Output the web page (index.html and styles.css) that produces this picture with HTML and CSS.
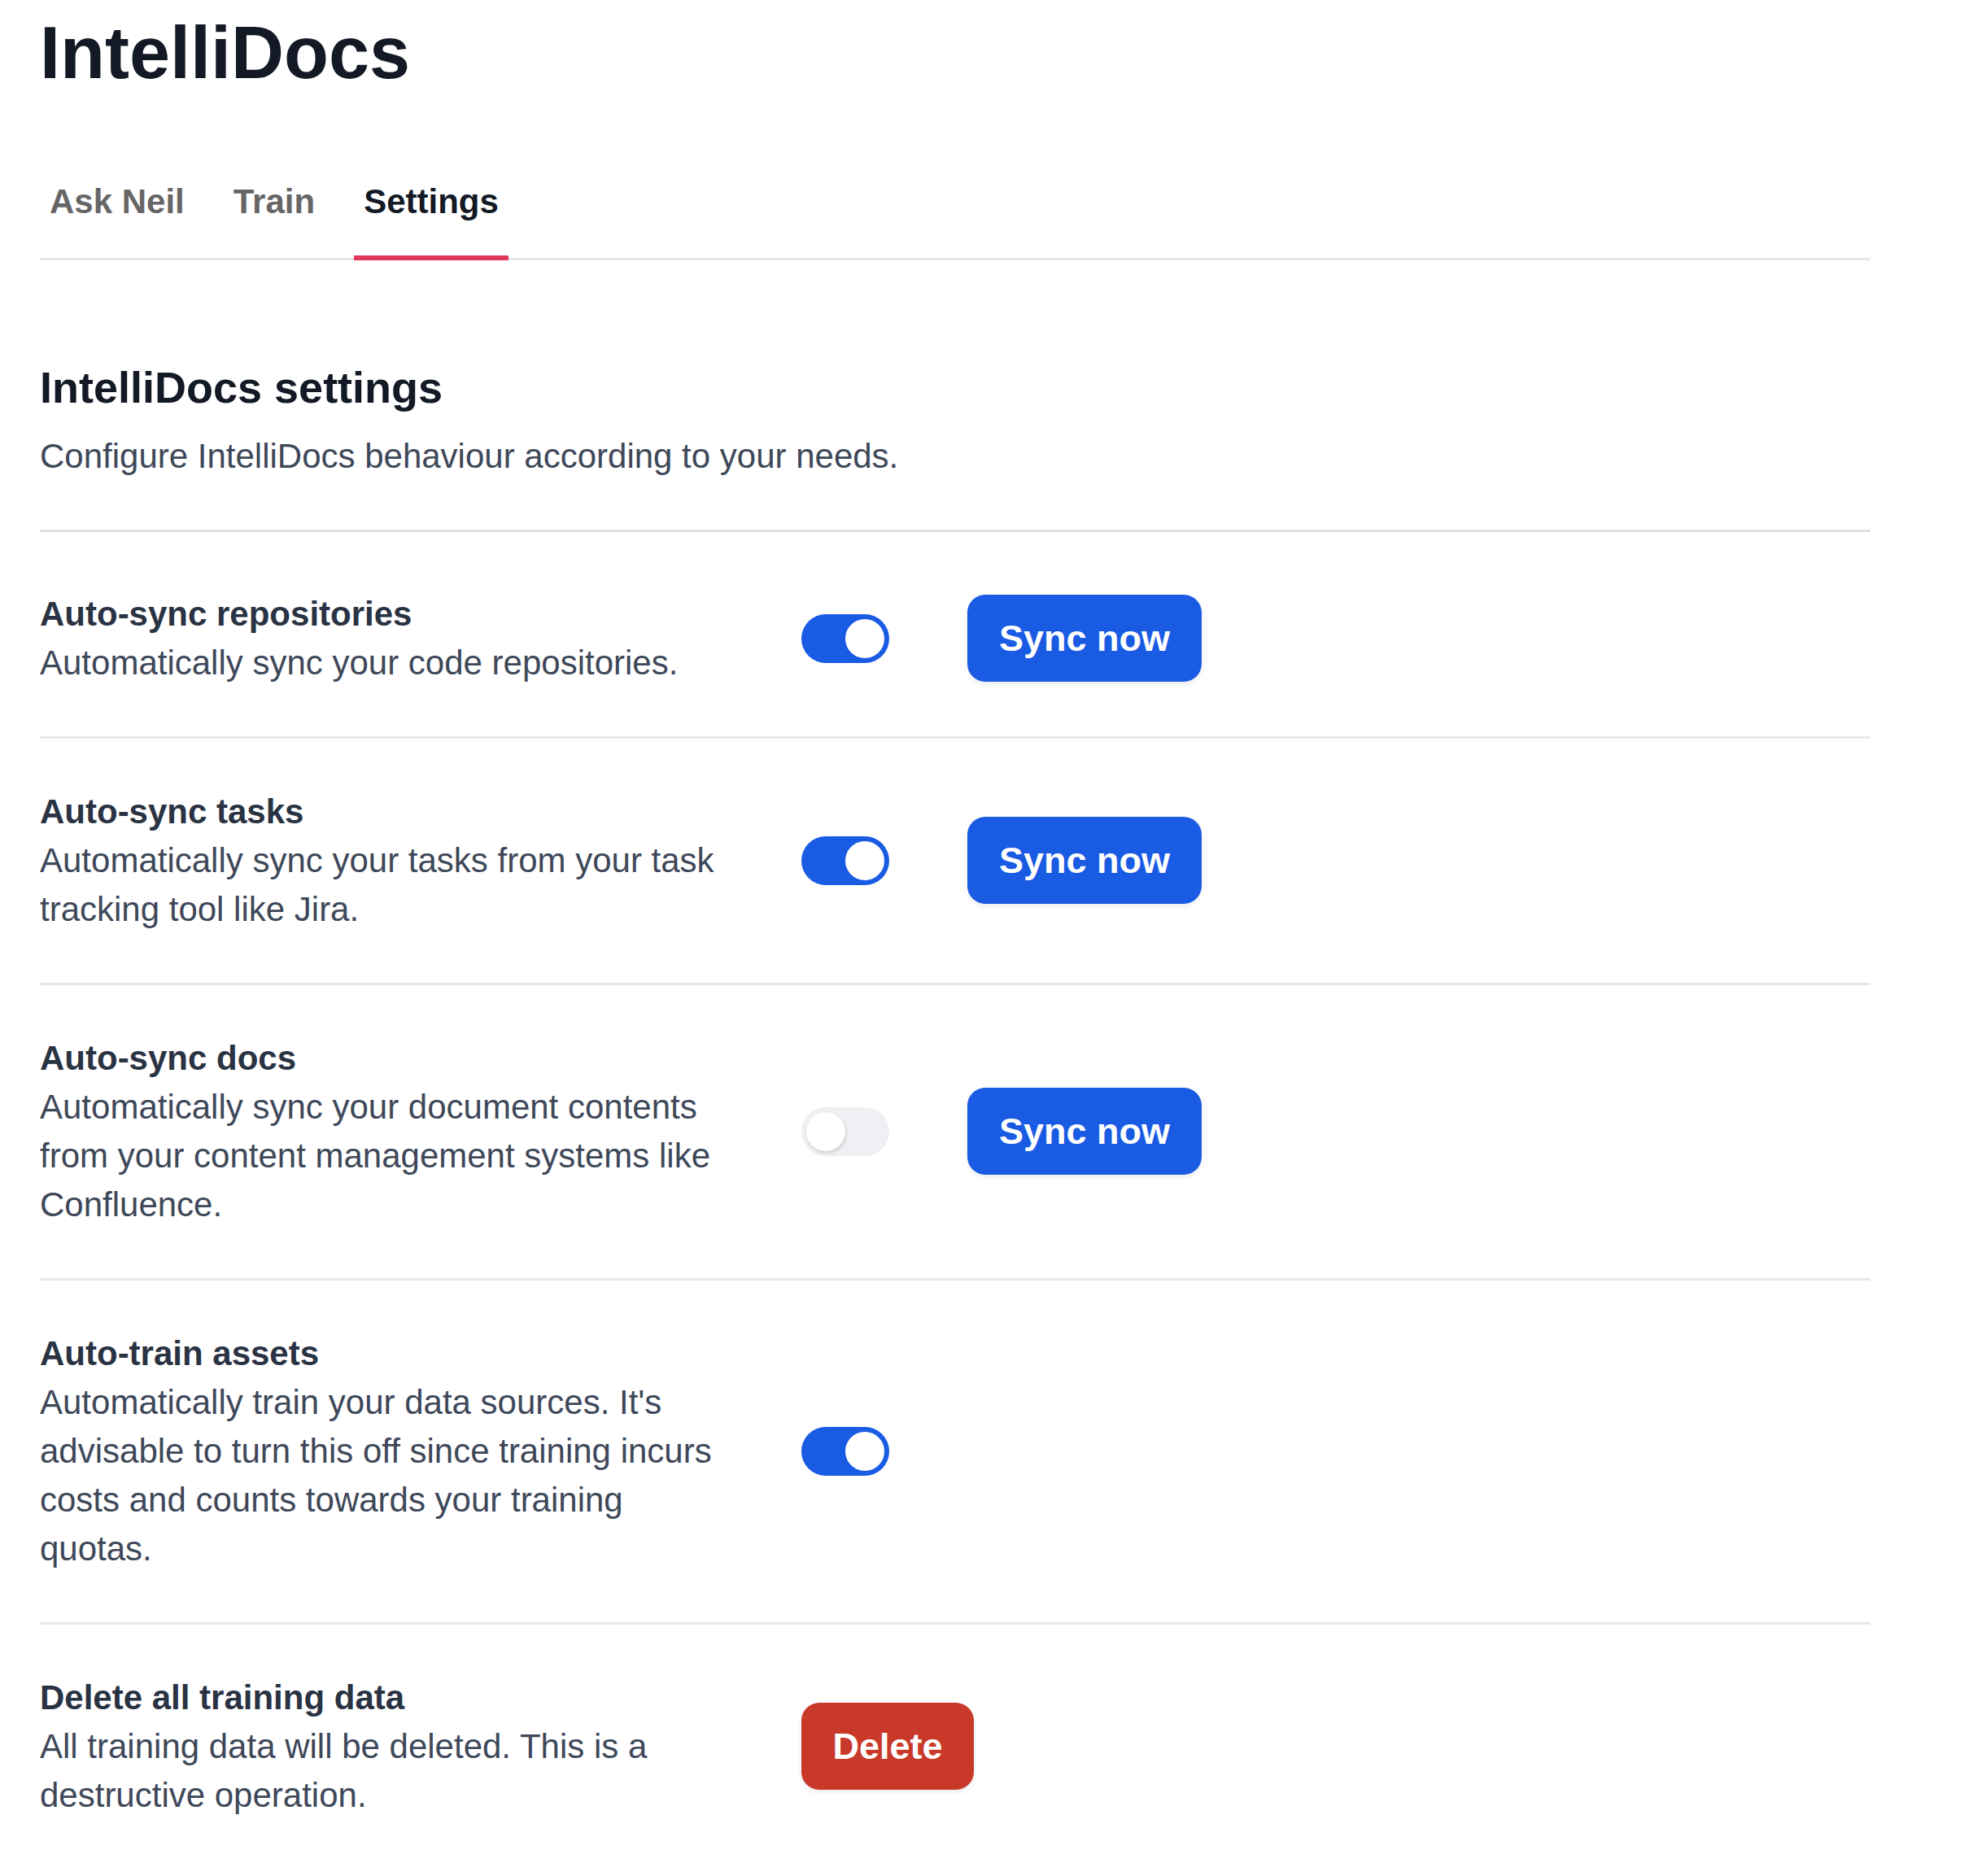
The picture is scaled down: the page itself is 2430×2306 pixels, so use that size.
FILE: index.html
```html
<!DOCTYPE html>
<html lang="en">
<head>
<meta charset="utf-8">
<title>IntelliDocs</title>
<link rel="stylesheet" href="styles.css">
</head>
<body>
<div class="page">
  <h1 class="title">IntelliDocs</h1>
  <nav class="tabs">
    <a class="tab">Ask Neil</a>
    <a class="tab">Train</a>
    <a class="tab active">Settings</a>
  </nav>
  <section class="header">
    <h2 class="heading">IntelliDocs settings</h2>
    <p class="intro">Configure IntelliDocs behaviour according to your needs.</p>
  </section>
  <div class="rows">
    <div class="row">
      <div class="row-text">
        <div class="label">Auto-sync repositories</div>
        <div class="desc">Automatically sync your code repositories.</div>
      </div>
      <div class="controls">
        <span class="toggle on"><span class="knob"></span></span>
        <button class="btn btn-blue">Sync now</button>
      </div>
    </div>
    <div class="row">
      <div class="row-text">
        <div class="label">Auto-sync tasks</div>
        <div class="desc">Automatically sync your tasks from your task tracking tool like Jira.</div>
      </div>
      <div class="controls">
        <span class="toggle on"><span class="knob"></span></span>
        <button class="btn btn-blue">Sync now</button>
      </div>
    </div>
    <div class="row">
      <div class="row-text">
        <div class="label">Auto-sync docs</div>
        <div class="desc">Automatically sync your document contents from your content management systems like Confluence.</div>
      </div>
      <div class="controls">
        <span class="toggle"><span class="knob"></span></span>
        <button class="btn btn-blue">Sync now</button>
      </div>
    </div>
    <div class="row">
      <div class="row-text">
        <div class="label">Auto-train assets</div>
        <div class="desc">Automatically train your data sources. It's advisable to turn this off since training incurs costs and counts towards your training quotas.</div>
      </div>
      <div class="controls">
        <span class="toggle on"><span class="knob"></span></span>
      </div>
    </div>
    <div class="row last">
      <div class="row-text">
        <div class="label">Delete all training data</div>
        <div class="desc">All training data will be deleted. This is a destructive operation.</div>
      </div>
      <div class="controls">
        <button class="btn btn-red">Delete</button>
      </div>
    </div>
  </div>
</div>
</body>
</html>
```
FILE: styles.css
```css
html, body {
  margin: 0;
  padding: 0;
  background: #ffffff;
}
body {
  font-family: "Liberation Sans", Arial, Helvetica, sans-serif;
}
.page {
  width: 2250px;
  padding: 20px 0 0 49px;
}
.title {
  margin: 0;
  font-size: 90px;
  line-height: 90px;
  font-weight: 700;
  color: #131925;
}
.tabs {
  display: flex;
  gap: 36px;
  margin-top: 72px;
  border-bottom: 3px solid #e6e7ec;
}
.tab {
  display: block;
  padding: 36px 12px 36px 12px;
  font-size: 42px;
  line-height: 60px;
  font-weight: 700;
  color: #666666;
  border-bottom: 6px solid transparent;
  margin-bottom: -3px;
}
.tab.active {
  color: #131925;
  border-bottom-color: #e0395b;
}
.header {
  margin-top: 123px;
  padding-bottom: 60px;
  border-bottom: 3px solid #dfdfe1;
}
.heading {
  margin: 0;
  font-size: 54px;
  line-height: 67.5px;
  font-weight: 700;
  color: #131925;
}
.intro {
  margin: 20px 0 0 0;
  font-size: 42px;
  line-height: 60px;
  color: #3e4859;
}
.rows {
  margin-top: 11px;
}
.row {
  display: flex;
  align-items: center;
  padding: 60px 0;
  border-bottom: 3px solid #e6e7ec;
}
.row.last {
  border-bottom: none;
}
.row-text {
  width: 842px;
  margin-right: 94px;
  flex: none;
}
.label {
  font-size: 42px;
  line-height: 60px;
  font-weight: 700;
  color: #2a3343;
}
.desc {
  font-size: 42px;
  line-height: 60px;
  color: #3e4859;
}
.controls {
  display: flex;
  align-items: center;
  gap: 96px;
}
.toggle {
  display: block;
  position: relative;
  width: 108px;
  height: 60px;
  border-radius: 30px;
  background: #eff0f3;
}
.toggle.on {
  background: #1a5be4;
}
.knob {
  position: absolute;
  top: 6px;
  left: 6px;
  width: 48px;
  height: 48px;
  border-radius: 50%;
  background: #ffffff;
  box-shadow: 1px 2px 4px rgba(0, 0, 0, 0.16);
}
.toggle.on .knob {
  left: 54px;
  box-shadow: none;
}
.btn {
  display: inline-flex;
  align-items: center;
  justify-content: center;
  width: 288px;
  height: 107px;
  padding: 0;
  border: none;
  border-radius: 22px;
  font-family: "Liberation Sans", Arial, Helvetica, sans-serif;
  font-size: 45px;
  font-weight: 700;
  color: #ffffff;
  box-shadow: 0 3px 6px rgba(0, 0, 0, 0.08);
}
.btn-blue {
  background: #1a5be4;
}
.btn-red {
  width: 212px;
  background: #c8392a;
}
```
